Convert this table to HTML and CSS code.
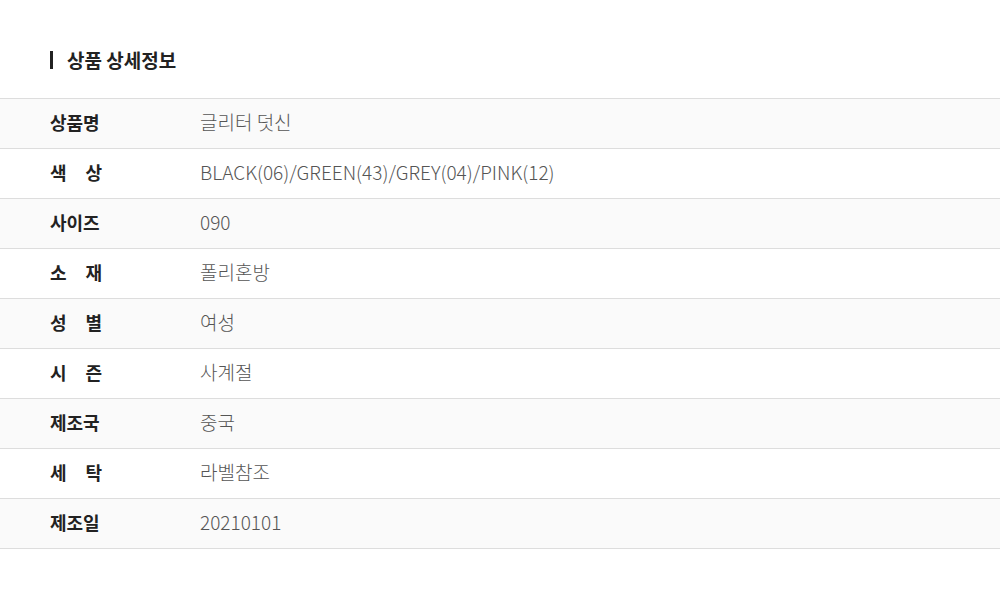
FILE: index.html
```html
<!DOCTYPE html>
<html>
<head>
    <title>상품 상세정보</title>
    <link rel="stylesheet" href="styles.css">
</head>
<body>
    <div class="detail-container">
        <h2 class="detail-title">상품 상세정보</h2>
        <table class="detail-table">
            <tr><th><span>상품명</span></th><td>글리터 덧신</td></tr>
            <tr><th><span>색 상</span></th><td>BLACK(06)/GREEN(43)/GREY(04)/PINK(12)</td></tr>
            <tr><th><span>사이즈</span></th><td>090</td></tr>
            <tr><th><span>소 재</span></th><td>폴리혼방</td></tr>
            <tr><th><span>성 별</span></th><td>여성</td></tr>
            <tr><th><span>시 즌</span></th><td>사계절</td></tr>
            <tr><th><span>제조국</span></th><td>중국</td></tr>
            <tr><th><span>세 탁</span></th><td>라벨참조</td></tr>
            <tr><th><span>제조일</span></th><td>20210101</td></tr>
        </table>
    </div>
</body>
</html>
```

FILE: styles.css
```css
* {
    margin: 0;
    padding: 0;
    box-sizing: border-box;
    font-family: "Noto Sans CJK KR", "Noto Sans", sans-serif;
}

body {
    background: #fff;
}

.detail-container {
    padding-top: 51px;
}

.detail-title {
    margin-left: 50px;
    padding-left: 14px;
    border-left: 3px solid #222;
    font-size: 19px;
    font-weight: 700;
    line-height: 18px;
    height: 18px;
    color: #222;
    margin-bottom: 29px;
    display: flex;
    align-items: center;
}

.detail-table {
    width: 100%;
    border-collapse: collapse;
    border-top: 1px solid #ddd;
}

.detail-table tr {
    height: 50px;
    border-bottom: 1px solid #ddd;
}

.detail-table tr:nth-child(odd) {
    background: #fafafa;
}

.detail-table th,
.detail-table td {
    padding-bottom: 4px;
}

.detail-table th {
    width: 200px;
    padding-left: 50px;
    text-align: left;
    font-size: 18px;
    font-weight: 700;
    color: #222;
}

.detail-table th span {
    display: inline-block;
    width: 52px;
    text-align: justify;
    text-align-last: justify;
}

.detail-table td {
    font-size: 19px;
    font-weight: 300;
    color: #555;
}
```
